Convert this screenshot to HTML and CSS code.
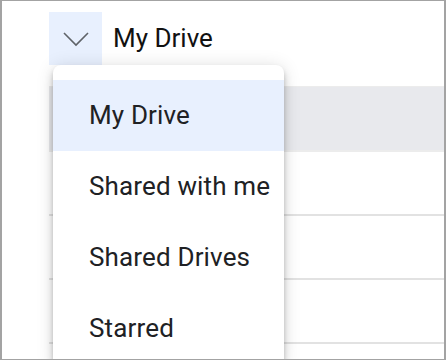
FILE: index.html
```html
<!DOCTYPE html>
<html lang="en">
<head>
  <meta charset="UTF-8" />
  <meta name="viewport" content="width=device-width, initial-scale=1.0" />
  <title>Drive picker</title>
  <link rel="stylesheet" href="styles.css">
</head>
<body>
  <div class="frame">
    <div class="picker">
      <button class="toggle" type="button" aria-label="Choose drive">
        <svg width="28" height="16" viewBox="0 0 28 16">
          <path d="M2 2 L14 14 L26 2" fill="none" stroke="#5f6368" stroke-width="1.6" />
        </svg>
      </button>
      <span class="current">My Drive</span>
    </div>

    <div class="file-table">
      <div class="row head"></div>
      <div class="row"></div>
      <div class="row"></div>
      <div class="row"></div>
    </div>

    <ul class="menu">
      <li class="selected">My Drive</li>
      <li>Shared with me</li>
      <li>Shared Drives</li>
      <li>Starred</li>
    </ul>
  </div>
</body>
</html>
```

FILE: styles.css
```css
body {
  margin: 0;
  font-family: Roboto, 'Liberation Sans', sans-serif;
  background-color: #fff;
}

.frame {
  position: relative;
  box-sizing: border-box;
  width: 446px;
  height: 360px;
  overflow: hidden;
  border: 1px solid #a3a3a3;
  border-left-width: 2px;
  border-right-width: 2px;
  padding: 11px 0 0 47px;
}

.picker {
  display: flex;
  align-items: center;
  gap: 11px;
}

.toggle {
  width: 53px;
  height: 53px;
  display: flex;
  align-items: center;
  justify-content: center;
  padding: 0;
  border: none;
  background-color: #e8f0fe;
}

.toggle svg {
  display: block;
  margin-top: 1px;
}

.current {
  font-size: 26px;
  color: #111;
  margin-top: -2px;
}

.file-table {
  margin-top: 21px;
  border-top: 1px solid #ececec;
}

.row {
  height: 62px;
  border-bottom: 2px solid #e2e2e2;
}

.row.head {
  height: 63px;
  background-color: #e8e9ed;
  border-bottom-color: #ececec;
}

.menu {
  position: absolute;
  left: 51px;
  top: 64px;
  width: 231px;
  margin: 0;
  padding: 15px 0 0;
  list-style: none;
  background-color: #fff;
  border-radius: 8px 8px 0 0;
  box-shadow: 0 3px 5px -1px rgba(0, 0, 0, 0.2), 0 6px 10px 0 rgba(0, 0, 0, 0.14), 0 1px 18px 0 rgba(0, 0, 0, 0.12);
}

.menu li {
  height: 71px;
  display: flex;
  align-items: center;
  padding: 0 0 2px 36px;
  box-sizing: border-box;
  font-size: 26px;
  letter-spacing: 0.15px;
  color: #202124;
}

.menu li.selected {
  background-color: #e8f0fe;
}
```
